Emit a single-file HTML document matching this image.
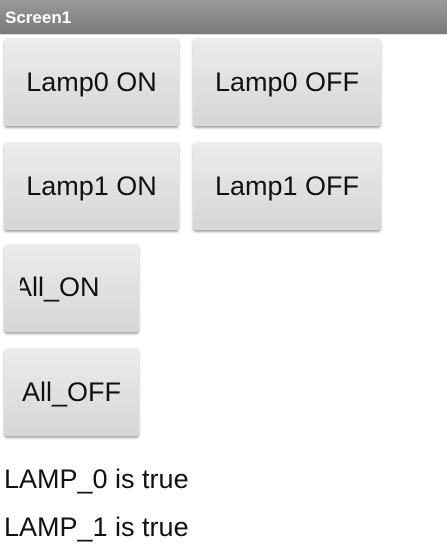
<!DOCTYPE html>
<html><head><style>
body{margin:0;width:447px;height:551px;background:#fff;font-family:"Liberation Sans",sans-serif;position:relative;overflow:hidden}
.bar{position:absolute;left:0;top:0;width:447px;height:34px;background:linear-gradient(#9a9a9a,#7a7a7a);border-bottom:1px solid #ddd}
.bar span{position:absolute;left:5px;top:8px;color:#fff;font-weight:bold;font-size:17px}
.b{position:absolute;background:linear-gradient(#ececec,#d6d6d6);border-radius:3px;box-shadow:0 2px 2px rgba(0,0,0,.35);font-size:27px;color:#111;display:flex;align-items:center;justify-content:center;overflow:hidden}
.t{position:absolute;left:4px;font-size:27px;color:#111}
</style></head><body>
<div class="bar"><span>Screen1</span></div>
<div class="b" style="left:4px;top:38px;width:175px;height:88px">Lamp0 ON</div>
<div class="b" style="left:193px;top:38px;width:188px;height:88px">Lamp0 OFF</div>
<div class="b" style="left:4px;top:142px;width:175px;height:88px">Lamp1 ON</div>
<div class="b" style="left:193px;top:142px;width:188px;height:88px">Lamp1 OFF</div>
<div class="b" style="left:4px;top:244px;width:135px;height:88px"><span style="position:absolute;left:16px;top:28px;width:90px;height:34px;overflow:hidden"><span style="position:absolute;left:-6px;top:0;white-space:nowrap">All_ON</span></span></div>
<div class="b" style="left:4px;top:348px;width:135px;height:88px">All_OFF</div>
<div class="t" style="top:464px">LAMP_0 is true</div>
<div class="t" style="top:512px">LAMP_1 is true</div>
</body></html>
